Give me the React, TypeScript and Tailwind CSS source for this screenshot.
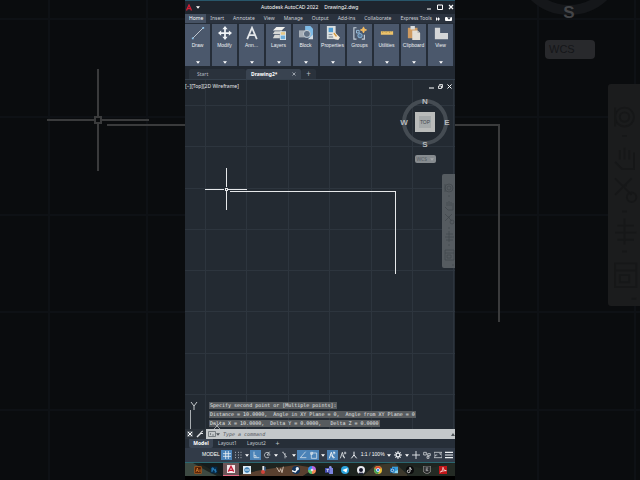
import type { ReactNode } from "react";

const sans = "font-['Noto_Sans','Open_Sans',sans-serif]";
const labelSans = "font-['Liberation_Sans',Arial,sans-serif]";
const mono = "font-['DejaVu_Sans_Mono','Liberation_Mono',monospace]";

const menuTabs = ["Home", "Insert", "Annotate", "View", "Manage", "Output", "Add-ins", "Collaborate", "Express Tools"];

const history = [
  "Specify second point or [Multiple points]:",
  "Distance = 10.0000,  Angle in XY Plane = 0,  Angle from XY Plane = 0",
  "Delta X = 10.0000,  Delta Y = 0.0000,   Delta Z = 0.0000",
];

const panels: { label: string; icon: ReactNode }[] = [
  {
    label: "Draw",
    icon: (
      <>
        <path d="M2 14L14 2" stroke="#dfe4ea" strokeWidth="0.9" />
        <path d="M1 13h2v2H1zM13 1h2v2h-2z" fill="#8fc3ea" />
      </>
    ),
  },
  {
    label: "Modify",
    icon: (
      <path
        d="M8 0l3 3.6H9v3.4h3.4V5L16 8l-3.6 3V9H9v3.4h2L8 16l-3-3.6h2V9H3.6v2L0 8l3.6-3v2H7V3.6H5z"
        fill="#f1f4f7"
      />
    ),
  },
  {
    label: "Ann...",
    icon: <path d="M2.5 15L8 2l5.500 13M4.500 10.500h7" stroke="#e4e7ea" strokeWidth="2" fill="none" />,
  },
  {
    label: "Layers",
    icon: (
      <>
        <path d="M5 1h10l-4 4H1z" fill="#f1f1ee" />
        <path d="M3 6h9l-3 3H1zM3 10h6v4H1z" fill="#d6d8d6" />
        <path d="M9 6h7v10H9z" fill="#d9e3ea" />
        <path d="M10 7h5v3h-5z" fill="#e6c888" />
        <path d="M10 11h5v4h-5z" fill="#6faedb" />
      </>
    ),
  },
  {
    label: "Block",
    icon: (
      <>
        <path d="M7 0h6l3 3v10H7z" fill="#7fbbe6" />
        <path d="M0 5h10v8H0z" fill="#a7aeb6" />
        <circle cx="9" cy="9" r="4" fill="#627286" stroke="#ced5dc" />
        <path d="M10 15l6-5v5z" fill="#d5dde4" />
      </>
    ),
  },
  {
    label: "Properties",
    icon: (
      <>
        <path d="M1 0h10v15H1z" fill="#d9dedf" />
        <path d="M3 2h5v5H3z" fill="#4c9cd4" />
        <path d="M3 9h5v1H3zM3 12h5v1H3z" fill="#77828e" />
        <path d="M7 9l3-2 6 6-2 3-4-1z" fill="#f3ead8" />
        <path d="M9 8l3 4" stroke="#d59b3f" strokeWidth="1.500" />
      </>
    ),
  },
  {
    label: "Groups",
    icon: (
      <>
        <path d="M4 2H1v13h3M10 15h3v-5" stroke="#c5ced8" strokeWidth="1.300" fill="none" />
        <path d="M4 5h3v3H4z" stroke="#9fc6e4" fill="none" />
        <circle cx="8" cy="11" r="2.500" stroke="#8bbbe0" fill="#5c7a99" />
        <path d="M12 1l1 2.500 2.500 1-2.500 1-1 2.500-1-2.500-2.500-1 2.500-1z" fill="#f5bd62" stroke="#f5bd62" />
      </>
    ),
  },
  {
    label: "Utilities",
    icon: (
      <>
        <path d="M1 6h14v4H1z" fill="#edc36b" />
        <path d="M3 6v2M5 6v1M7 6v2M9 6v1M11 6v2M13 6v1" stroke="#9b7b39" strokeWidth="0.600" />
      </>
    ),
  },
  {
    label: "Clipboard",
    icon: (
      <>
        <path d="M1 2h11v12H1z" fill="#ce9a61" />
        <path d="M4 0h5v4H4z" fill="#dadddf" />
        <path d="M6 5h6l3 3v8H6z" fill="#e3ded6" />
        <path d="M12 5v3h3z" fill="#b8b6b2" />
      </>
    ),
  },
  { label: "View", icon: <path d="M1 2h6v6h9v7H1z" fill="#d4d6d8" /> },
];

type StatusItem = { label: string; on?: boolean; caret?: boolean; text?: boolean; icon?: ReactNode };

const statusItems: StatusItem[] = [
  { label: "MODEL", text: true },
  { label: "Grid", on: true, icon: <path d="M4 0v12M8 0v12M0 4h12M0 8h12" strokeWidth="1.200" /> },
  { label: "Snap", caret: true, icon: <path d="M2 2h1M6 2h1M10 2h1M2 6h1M6 6h1M10 6h1M2 10h1M6 10h1M10 10h1" strokeWidth="1.500" /> },
  { label: "Ortho", on: true, icon: <path d="M3 1v9h8M3 7h3v3" /> },
  { label: "Polar tracking", caret: true, icon: <path d="M10 5a4 4 0 1 0-1 4M6 6h5M6 6l4-5" /> },
  { label: "Isometric drafting", caret: true, icon: <path d="M6 11V3M6 6L3 2M6 7l3 2M3 1v2" /> },
  { label: "Object snap tracking", on: true, icon: <path d="M10 1L2 10h9" /> },
  { label: "Object snap", on: true, caret: true, icon: <path d="M2 3h8v8H2zM1 2h3v3H1z" /> },
  { label: "Annotation visibility", on: true, icon: <path d="M2 11l3-9 3 9M5 7l5 3M8 2l3 1M9 1v4" strokeWidth="1.500" /> },
  { label: "Auto scale", icon: <path d="M2 11l3-9 3 9M5 7l4 3M8 3h3M9 1v4" strokeWidth="1.200" /> },
  { label: "Annotation scale", icon: <path d="M2 11l4-5 4 5M6 1v6" strokeWidth="1.500" /> },
  { label: "1:1 / 100%", text: true, caret: true },
  {
    label: "Workspace",
    caret: true,
    icon: (
      <>
        <circle cx="6" cy="6" r="3" strokeWidth="2" />
        <path d="M6 0v2M6 10v2M0 6h2M10 6h2M2 2l1 1M9 9l1 1M2 10l1-1M9 3l1-1" strokeWidth="1.500" />
      </>
    ),
  },
  { label: "Annotation monitor", icon: <path d="M6 0v12M0 6h12" strokeWidth="1.300" /> },
  { label: "Isolate objects", icon: <path d="M1 2h4v4H1zM7 4h4v3H7zM6 8h3v3H6z" /> },
  { label: "Clean screen", icon: <path d="M0 2h12v8H0zM2 8V6h3M8 4h2v2" /> },
  { label: "Customization", icon: <path d="M0 2h12M0 6h12M0 10h12" strokeWidth="1.800" /> },
];

const apps: { name: string; active?: boolean; icon: ReactNode }[] = [
  { name: "Illustrator", icon: <><path d="M1 1h10v10H1z" fill="#4c1c05" stroke="#c86418" /><path d="M3 9l2-6 2 6M4 7h2M9 5v4" stroke="#e88930" fill="none" /></> },
  { name: "Photoshop", icon: <><path d="M1 1h10v10H1z" fill="#062a47" /><path d="M3 9V3h2v3H3M9 5H7v2h2v2H7" stroke="#39a5eb" fill="none" /></> },
  { name: "AutoCAD", active: true, icon: <><path d="M0 0h12v12H0z" fill="#f3e9ea" /><path d="M2 10l4-8 4 8M4 8h4" stroke="#c51b37" strokeWidth="2" fill="none" /></> },
  { name: "Viewer", icon: <><path d="M0 0h12v12H0z" fill="#dcebf3" /><circle cx="6" cy="6" r="4" fill="#327ab1" /><path d="M3 5h6M3 7h6" stroke="#dcebf3" /></> },
  { name: "Thermometer", icon: <><path d="M5 0h3v8H5z" fill="#e4e5e8" /><circle cx="6" cy="9" r="3" fill="#d2433a" /><path d="M8 1h2v6H8z" fill="#436da0" /></> },
  { name: "Sketch", icon: <path d="M1 2l4 7 2-5 2 6 2-9" stroke="#c9b7a8" strokeWidth="1.500" fill="none" /> },
  { name: "Steam", icon: <><circle cx="6" cy="6" r="6" fill="#12345c" /><circle cx="8" cy="4" r="2.500" fill="#e8eef3" /><path d="M0 7l5 2 3-4" stroke="#fff" strokeWidth="2" fill="none" /></> },
  { name: "Copilot", icon: <><path d="M6 0a6 6 0 0 1 6 6H6z" fill="#b966dd" /><path d="M12 6a6 6 0 0 1-6 6V6z" fill="#f08a58" /><path d="M6 12a6 6 0 0 1-6-6h6z" fill="#5ac56e" /><path d="M0 6a6 6 0 0 1 6-6v6z" fill="#388de7" /><circle cx="6" cy="6" r="2" fill="#e7e5eb" /></> },
  { name: "Teams", icon: <><path d="M3 3h9v6a3 3 0 0 1-6 2z" fill="#7b83df" /><circle cx="8" cy="2" r="2" fill="#8d94eb" /><path d="M0 3h7v7H0z" fill="#464fb5" /><path d="M2 5h4M4 5v4" stroke="#fff" /></> },
  { name: "Telegram", icon: <><circle cx="6" cy="6" r="6" fill="#2aa2dc" /><path d="M2 6l8-3-2 7-3-2z" fill="#fff" /></> },
  { name: "Camera", icon: <><circle cx="6" cy="6" r="6" fill="#e9eaf0" /><circle cx="6" cy="6" r="3" fill="#17182b" /><path d="M3 10h6v2H3z" fill="#252740" /></> },
  { name: "Chrome", icon: <><circle cx="6" cy="6" r="6" fill="#e6bd38" /><path d="M1 3a6 6 0 0 1 10 0L6 6z" fill="#dc4435" /><path d="M1 3a6 6 0 0 0 5 9l2-5-5-1z" fill="#3ba05a" /><circle cx="6" cy="6" r="2.500" fill="#4488e6" stroke="#fff" /></> },
  { name: "Outlook", icon: <><path d="M3 1h9v9H3z" fill="#3a9edb" /><path d="M4 6l4 2 4-2v5H4z" fill="#89d2ee" /><path d="M0 3h7v7H0z" fill="#0f65ad" /><circle cx="3.500" cy="6.500" r="2" stroke="#fff" fill="none" /></> },
  { name: "TikTok", icon: <><circle cx="6" cy="6" r="6" fill="#0b0b0c" /><path d="M6 2v6a2 2 0 1 1-2-2M6 2c0 2 1 3 3 3" stroke="#f1f1f1" strokeWidth="1.300" fill="none" /></> },
  { name: "Epic Games", icon: <><path d="M1 0h10v9l-5 3-5-3z" fill="#26282a" stroke="#aaa9a4" /><path d="M4 3h4M4 5h3M4 7h4" stroke="#dedede" /></> },
  { name: "Acrobat", icon: <><path d="M0 0h12v12H0z" fill="#c01619" /><path d="M2 9c3-1 4-4 4-7 0 3 2 5 5 5-4 0-7 1-9 2z" stroke="#fff" fill="none" /></> },
];

function Caret({ className = "text-white" }: { className?: string }) {
  return (
    <svg viewBox="0 0 6 4" className={`w-1 h-[3px] ${className}`} aria-hidden="true">
      <path d="M0 0h6L3 4z" fill="currentColor" />
    </svg>
  );
}

/* Orbit / pan / zoom glyphs of the navigation bar */
function NavGlyphs() {
  return (
    <g fill="none" stroke="currentColor" strokeWidth="0.800">
      <circle cx="7" cy="14" r="4" />
      <circle cx="7" cy="14" r="2" />
      <path d="M3 10v8M6 22h2" />
      <path d="M3 33l3 3h5v-7M5 32v-4M7 32v-5M9 32v-4" />
      <path d="M3 40l7 7M10 40l-7 7M6 43h2" />
      <circle cx="10" cy="48" r="2" />
      <path d="M6 54h2M7 57v11M4 60h7M3 63h9M4 66h7M6 71h2" />
      <path d="M3 76h9v10H3zM3 79h9M5 81h4v3H5zM10 91h2" />
    </g>
  );
}

/* Enlarged, darkened copy of the drawing behind the window */
function Backdrop() {
  return (
    <svg
      viewBox="0 0 640 480"
      preserveAspectRatio="xMidYMid slice"
      className={`absolute inset-0 w-full h-full ${labelSans}`}
      aria-hidden="true"
    >
      <path
        d="M49 0v480M147 0v480M538 0v480M635 0v480M0 19h640M0 117h640M0 215h640M0 312h640M0 410h640"
        stroke="#0e1115"
        strokeWidth="2"
      />
      <g stroke="#3a3b3c" strokeWidth="2" fill="none">
        <path d="M47 120h47M102 120h47M98 69v47M98 124v47" />
        <path d="M95 117h6v6h-6z" />
        <path d="M107 125h392v197" />
      </g>
      <circle cx="569" cy="-41" r="51" fill="none" stroke="#15171a" strokeWidth="10" />
      <text x="569" y="18" textAnchor="middle" fontSize="17" fontWeight="bold" fill="#444548">S</text>
      <rect x="545" y="40" width="50" height="19" rx="4" fill="#28292c" />
      <text x="549" y="53" fontSize="11" fill="#151619">WCS</text>
      <rect x="608" y="84" width="40" height="222" rx="3" fill="#1b1c1d" />
      <g transform="translate(608 84) scale(2.360)" className="text-[#161718]">
        <NavGlyphs />
      </g>
    </svg>
  );
}

function TitleBar() {
  return (
    <header className="relative flex items-center justify-between h-[14px] pl-px pr-px pb-px border-t border-[#28566a] bg-[#1e252e] shrink-0">
      <button className="flex items-center gap-1" aria-label="Application menu">
        <svg viewBox="0 0 12 12" className="w-[6px] h-[7px]" aria-hidden="true">
          <path d="M1 12L6 1l5 11M3 8h6" fill="none" stroke="#d51f35" strokeWidth="2.500" />
        </svg>
        <Caret />
      </button>
      <h1 className="absolute left-[76px] flex gap-[6px] whitespace-nowrap text-[5px] leading-[8px] text-white">
        <span>Autodesk AutoCAD 2022</span>
        <span>Drawing2.dwg</span>
      </h1>
      <div className="flex items-center gap-[5px] text-white">
        <button aria-label="Minimize"><svg viewBox="0 0 6 6" className="w-[6px] h-[6px]"><path d="M1 5h4" stroke="currentColor" /></svg></button>
        <button aria-label="Maximize"><svg viewBox="0 0 6 6" className="w-[6px] h-[6px]"><path d="M.5 1h5v4.500h-5z" stroke="currentColor" fill="none" /></svg></button>
        <button aria-label="Close"><svg viewBox="0 0 6 6" className="w-[6px] h-[6px]"><path d="M1 1l4 4M5 1L1 5" stroke="currentColor" strokeWidth="1.200" /></svg></button>
      </div>
    </header>
  );
}

function Ribbon() {
  return (
    <>
      <nav className="flex items-center h-[9px] shrink-0 bg-[#2b333f] text-[5px] leading-[9px] text-[#cdd2d8] whitespace-nowrap">
        {menuTabs.map((tab) => (
          <button
            key={tab}
            className={tab === "Home" ? "pl-1 pr-[3px] mr-[4px] bg-[#465264] text-white" : "mr-[9px] last-of-type:mr-0"}
          >
            {tab}
          </button>
        ))}
        <span className="flex items-center gap-[5px] ml-auto text-white">
          <svg viewBox="0 0 6 6" className="w-1 h-1"><path d="M0 0l3 3-3 3zM3 0l3 3-3 3z" fill="currentColor" /></svg>
          <button aria-label="Minimize ribbon" className="flex items-center justify-center w-[7px] h-[4px] mr-[3px] rounded-[1px] bg-white">
            <Caret className="text-[#2b333f]" />
          </button>
        </span>
      </nav>
      <div className={`grid grid-cols-10 gap-[2px] h-[43px] pt-px pr-[2px] shrink-0 bg-[#252d38] ${labelSans}`}>
        {panels.map((p) => (
          <button key={p.label} className="flex flex-col items-center min-w-0 pt-[2px] pb-[2px] bg-[#4b586c] text-[#edf0f3]">
            <svg viewBox="0 0 16 16" className="w-[14px] h-[14px] shrink-0" aria-hidden="true">{p.icon}</svg>
            <span className="mt-px text-[5px] leading-[8px]">{p.label}</span>
            <span className="mt-auto"><Caret /></span>
          </button>
        ))}
      </div>
      <div className="flex items-end h-[14px] shrink-0 bg-[#222932] border-b border-[#35404c] text-[5px] leading-[10px] text-[#b4bac1]">
        <button className="h-[10px] w-[57px] ml-1 pl-2 text-left bg-[#2a323c] rounded-t-xs">Start</button>
        <div className="flex justify-between h-[10px] w-[55px] pl-[5px] pr-[5px] bg-[#394350] rounded-t-xs">
          <button className="font-bold text-white">Drawing2*</button>
          <button aria-label="Close Drawing2">
            <svg viewBox="0 0 4 4" className="w-1 h-1"><path d="M.5.5l3 3M3.500.5l-3 3" stroke="currentColor" strokeWidth=".8" /></svg>
          </button>
        </div>
        <button aria-label="New drawing" className="h-[10px] w-[15px] bg-[#2a323c] rounded-t-xs text-[8px]">+</button>
      </div>
    </>
  );
}

function ViewCube() {
  return (
    <div className="absolute right-[4px] top-[16px] flex flex-col items-center">
      <svg viewBox="0 0 52 52" className={`w-[52px] h-[52px] ${labelSans}`}>
        <circle cx="26" cy="26" r="21" fill="none" stroke="#454c53" strokeWidth="4" />
        <g fontSize="8" fontWeight="bold" fill="#b5b9bc" textAnchor="middle">
          <text x="26" y="8">N</text>
          <text x="26" y="51">S</text>
          <text x="5" y="29">W</text>
          <text x="48" y="29">E</text>
        </g>
        <path d="M16 16h20v20H16z" fill="#b9bbba" />
        <path d="M20 20h12v12H20z" fill="#a5a9aa" />
        <text x="26" y="28" fontSize="5" fill="#42474c" textAnchor="middle">TOP</text>
      </svg>
      <button className="flex items-center justify-between w-[21px] h-[8px] mt-[7px] px-[2px] rounded-xs bg-[#868b8f] text-[5px] leading-[8px] text-[#555c63]">
        WCS
        <Caret className="text-[#a4a8ab]" />
      </button>
    </div>
  );
}

function Canvas() {
  return (
    <main className="relative flex-1 min-h-0 overflow-hidden bg-[#232a32]">
      <svg
        viewBox="0 0 270 349"
        preserveAspectRatio="xMinYMin slice"
        className="absolute inset-0 w-full h-full"
        shapeRendering="crispEdges"
        aria-label="Drawing area"
      >
        <path
          d="M20.500 0v349M61.500 0v349M103.500 0v349M144.500 0v349M186.500 0v349M227.500 0v349M268.500 0v349M0 25.500h270M0 66.500h270M0 108.500h270M0 149.500h270M0 190.500h270M0 231.500h270M0 273.500h270M0 314.500h270"
          stroke="#2d353e"
        />
        <g stroke="#e6e8ea" fill="none">
          <path d="M45 111.500h165.500V194" />
          <path d="M20 109.500h19M43 109.500h19M41.500 88v19M41.500 111v19" />
          <path d="M40.500 108.500h2v2h-2z" />
          <path d="M5.500 330v19" stroke="#a8adb1" />
        </g>
        <path d="M6 322l3 4 3-4M9 326v4" fill="none" stroke="#c6cacd" shapeRendering="auto" />
      </svg>
      <p className="absolute left-0 top-[2px] text-[5px] leading-[8px] text-[#e3e6e8]">[−][Top][2D Wireframe]</p>
      <div className="absolute right-[3px] top-[4px] flex gap-[4px] text-white">
        <button aria-label="Minimize drawing"><svg viewBox="0 0 5 5" className="w-[5px] h-[5px]"><path d="M0 4h5" stroke="currentColor" /></svg></button>
        <button aria-label="Restore drawing"><svg viewBox="0 0 5 5" className="w-[5px] h-[5px]"><path d="M1.500 1.500V.5h3v3h-1M.5 2h3v2.500h-3z" stroke="currentColor" fill="none" strokeWidth=".8" /></svg></button>
        <button aria-label="Close drawing"><svg viewBox="0 0 5 5" className="w-[5px] h-[5px]"><path d="M.5.5l4 4M4.500.5l-4 4" stroke="currentColor" /></svg></button>
      </div>
      <ViewCube />
      <svg viewBox="0 0 13 94" className="absolute right-0 top-[94px] w-[13px] h-[94px] rounded-l-xs bg-[#555b60] text-[#43494e]" aria-label="Navigation bar">
        <NavGlyphs />
      </svg>
      <div className={`absolute left-[24px] bottom-[2px] flex flex-col items-start gap-[2px] text-[5px] leading-[7px] text-[#e4e5e5] ${mono}`}>
        {history.map((line) => (
          <p key={line} className="px-px whitespace-pre bg-[#575b5e]">{line}</p>
        ))}
      </div>
      <svg viewBox="0 0 6 6" className="absolute left-[29px] bottom-0 w-[6px] h-[6px]" aria-hidden="true">
        <path d="M0 6l3-3 3 3M0 0l3 3 3-3" stroke="#c6cacd" strokeWidth=".7" fill="none" />
      </svg>
    </main>
  );
}

function CommandLine() {
  return (
    <form className="flex items-center h-[10px] shrink-0 bg-[#2c333b]">
      <button type="button" aria-label="Close command line" className="w-[10px] text-white">
        <svg viewBox="0 0 6 6" className="w-[6px] h-[6px] ml-[2px]"><path d="M0 0h6v6H0z" fill="#5a6168" /><path d="M1 1l4 4M5 1L1 5" stroke="currentColor" /></svg>
      </button>
      <button type="button" aria-label="Customize" className="w-[11px] text-[#e3e6e8]">
        <svg viewBox="0 0 8 8" className="w-[8px] h-[8px] ml-px"><path d="M1 7l4-4" stroke="currentColor" strokeWidth="1.500" /><path d="M7 1L5 2v1l1 1 1-1" stroke="currentColor" fill="none" /></svg>
      </button>
      <label className="flex items-center flex-1 min-w-0 h-full pl-[2px] bg-[#c4c8ca]">
        <svg viewBox="0 0 8 6" className="w-[8px] h-[6px] shrink-0" aria-hidden="true">
          <path d="M.5.5h7v5h-7zM2 2l1 1-1 1M4 4h2" stroke="#666c71" fill="none" strokeWidth=".8" />
        </svg>
        <span className="mr-[3px]"><Caret className="text-[#4d5358]" /></span>
        <input
          aria-label="Command"
          placeholder="Type a command"
          className={`flex-1 min-w-0 bg-transparent text-[5px] leading-[8px] italic outline-none placeholder:text-[#55595e] ${mono}`}
        />
        <svg viewBox="0 0 4 3" className="w-1 h-[3px] shrink-0" aria-hidden="true"><path d="M0 3l2-3 2 3z" fill="#4d5358" /></svg>
      </label>
    </form>
  );
}

function StatusBar() {
  return (
    <div className={`flex items-center justify-between h-[14px] pl-[17px] shrink-0 bg-[#323b48] text-[5px] text-white ${labelSans}`}>
      {statusItems.map((s) => (
        <div key={s.label} className="flex items-center shrink-0">
          {s.text ? (
            <button className={s.label === "MODEL" ? "w-[19px] text-left whitespace-nowrap" : "px-px whitespace-nowrap"}>{s.label}</button>
          ) : (
            <button aria-label={s.label} className={`flex items-center justify-center w-[11px] h-[10px] ${s.on ? "bg-[#4b83b8]" : ""}`}>
              <svg viewBox="0 0 12 12" className="w-[8px] h-[8px]" fill="none" stroke="#eef1f4">{s.icon}</svg>
            </button>
          )}
          {s.caret && <span className="flex justify-center w-[7px]"><Caret /></span>}
        </div>
      ))}
    </div>
  );
}

function Taskbar() {
  return (
    <footer className="relative h-[18px] pb-1 shrink-0 border-t border-[#2b6770] bg-black">
      <svg viewBox="0 0 270 13" preserveAspectRatio="none" className="absolute inset-x-0 top-0 w-full h-[13px]" aria-hidden="true">
        <path d="M0 0h270v13H0z" fill="#1e2420" />
        <path d="M0 0h8l14 8 10 5H0z" fill="#3d4a42" />
        <path d="M14 0h40L38 13z" fill="#151b1b" />
        <path d="M50 13l26-6 35-5 19 3-12 8z" fill="#59402f" />
        <path d="M118 13l16-10 20 2 14 8z" fill="#1b201c" />
        <path d="M178 13l12-11 20-2 14 13z" fill="#3c382c" />
        <path d="M226 3l14 3 30-6v13h-48z" fill="#232a24" />
      </svg>
      <div className="relative flex justify-between h-[13px] pl-[5px] pr-[4px]">
        {apps.map((app) => (
          <button
            key={app.name}
            aria-label={app.name}
            className={`flex items-center justify-center w-4 h-[13px] ${app.active ? "bg-[#6c5557] border-b border-[#e56b85]" : ""}`}
          >
            <svg viewBox="0 0 12 12" className="w-[8px] h-[8px]">{app.icon}</svg>
          </button>
        ))}
      </div>
    </footer>
  );
}

export default function App() {
  return (
    <div className={`relative flex justify-center min-h-screen overflow-hidden bg-[#0a0c0e] ${sans}`}>
      <Backdrop />
      <div className="relative flex flex-col h-screen aspect-[9/16] overflow-hidden bg-[#222932]">
        <TitleBar />
        <Ribbon />
        <Canvas />
        <CommandLine />
        <div className="flex items-center h-[9px] shrink-0 bg-[#262e38] text-[5px] leading-[9px] text-[#c0c5ca]">
          <button className="w-[24px] ml-1 rounded-b-xs bg-[#3b4553] font-bold text-white">Model</button>
          <button className="w-[29px]">Layout1</button>
          <button className="w-[29px]">Layout2</button>
          <button aria-label="New layout" className="w-[13px] text-[7px]">+</button>
        </div>
        <StatusBar />
        <Taskbar />
      </div>
    </div>
  );
}
